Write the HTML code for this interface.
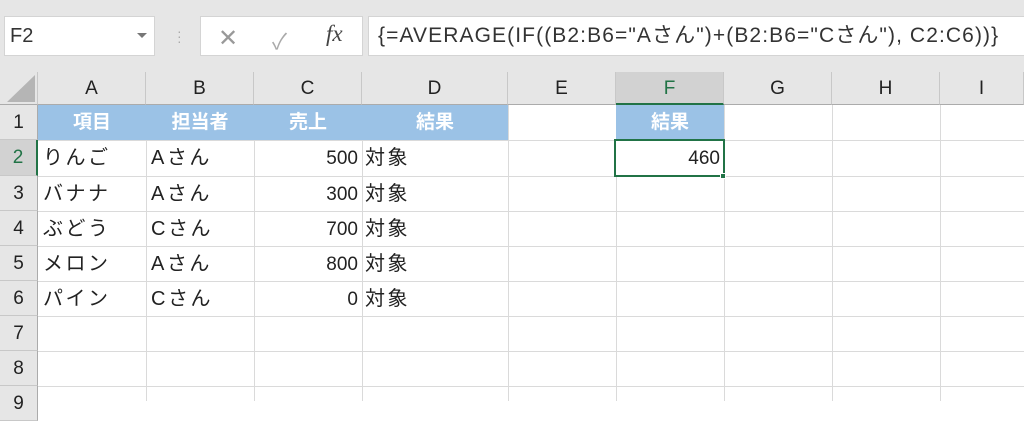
<!DOCTYPE html>
<html><head><meta charset="utf-8"><style>
body{margin:0;width:1024px;height:401px;overflow:hidden;background:#fff;font-family:"Liberation Sans","Noto Sans CJK JP",sans-serif;position:relative}
.a{position:absolute;box-sizing:border-box}
.top{left:0;top:0;width:1024px;height:72px;background:#e6e6e6}
.box{background:#fff;border:1px solid #d4d4d4}
.t{font-size:19px;color:#222;line-height:37px;white-space:nowrap}
.j{font-size:20px;letter-spacing:2.5px}
.ch{top:72px;height:33px;background:#e6e6e6;border-right:1px solid #c8c8c8;border-bottom:1px solid #ababab;text-align:center;font-size:19px;line-height:33px;color:#222}
.rh{left:0;width:38px;background:#e6e6e6;border-bottom:1px solid #c8c8c8;border-right:1px solid #ababab;text-align:center;font-size:19px;color:#222}
.vl{top:105px;width:1px;height:296px;background:#dadada}
.hl{left:38px;width:986px;height:1px;background:#dadada}
.hd{color:#fff;font-weight:bold;text-align:center}
</style></head><body>
<div class="a top"></div>
<div class="a box" style="left:4px;top:16px;width:151px;height:40px"></div>
<div class="a t" style="left:10px;top:18px;font-size:20px;color:#333">F2</div>
<div class="a" style="left:137px;top:33px;width:0;height:0;border-left:5px solid transparent;border-right:5px solid transparent;border-top:5px solid #777"></div>
<div class="a" style="left:177px;top:29px;color:#aaa;font-size:14px;line-height:5px">·<br>·<br>·</div>
<div class="a box" style="left:200px;top:16px;width:163px;height:40px"></div>
<div class="a" style="left:218px;top:24px;font-size:24px;color:#999">✕</div>
<div class="a" style="left:272px;top:24px;font-size:22px;color:#aaa">✓</div>
<div class="a" style="left:326px;top:21px;font-size:23px;color:#444;font-family:'Liberation Serif',serif;font-style:italic">fx</div>
<div class="a box" style="left:368px;top:16px;width:660px;height:40px"></div>
<div class="a t" style="left:378px;top:17px;font-size:21px;letter-spacing:1.1px;color:#333">{=AVERAGE(IF((B2:B6="Aさん")+(B2:B6="Cさん"), C2:C6))}</div>

<div class="a" style="left:0;top:72px;width:38px;height:33px;background:#e6e6e6;border-right:1px solid #c8c8c8;border-bottom:1px solid #ababab"></div>
<div class="a" style="left:7px;top:75px;width:0;height:0;border-left:28px solid transparent;border-bottom:27px solid #b5b5b5"></div>
<div class="a ch" style="left:38px;width:108px">A</div>
<div class="a ch" style="left:146px;width:108px">B</div>
<div class="a ch" style="left:254px;width:108px">C</div>
<div class="a ch" style="left:362px;width:146px">D</div>
<div class="a ch" style="left:508px;width:108px">E</div>
<div class="a ch" style="left:616px;width:108px;background:#d2d2d2;color:#217346;border-bottom:2px solid #217346">F</div>
<div class="a ch" style="left:724px;width:108px">G</div>
<div class="a ch" style="left:832px;width:108px">H</div>
<div class="a ch" style="left:940px;width:84px">I</div>

<div class="a rh" style="top:105px;height:35px;line-height:35px">1</div>
<div class="a rh" style="top:140px;height:36px;line-height:36px;background:#d2d2d2;color:#217346;border-right:2px solid #217346">2</div>
<div class="a rh" style="top:176px;height:35px;line-height:35px">3</div>
<div class="a rh" style="top:211px;height:35px;line-height:35px">4</div>
<div class="a rh" style="top:246px;height:35px;line-height:35px">5</div>
<div class="a rh" style="top:281px;height:35px;line-height:35px">6</div>
<div class="a rh" style="top:316px;height:35px;line-height:35px">7</div>
<div class="a rh" style="top:351px;height:35px;line-height:35px">8</div>
<div class="a rh" style="top:386px;height:35px;line-height:35px">9</div>

<div class="a vl" style="left:146px"></div><div class="a vl" style="left:254px"></div><div class="a vl" style="left:362px"></div><div class="a vl" style="left:508px"></div><div class="a vl" style="left:616px"></div><div class="a vl" style="left:724px"></div><div class="a vl" style="left:832px"></div><div class="a vl" style="left:940px"></div>
<div class="a hl" style="top:140px"></div><div class="a hl" style="top:176px"></div><div class="a hl" style="top:211px"></div><div class="a hl" style="top:246px"></div><div class="a hl" style="top:281px"></div><div class="a hl" style="top:316px"></div><div class="a hl" style="top:351px"></div><div class="a hl" style="top:386px"></div>

<div class="a" style="left:38px;top:105px;width:470px;height:35px;background:#9bc2e6"></div>
<div class="a" style="left:616px;top:105px;width:108px;height:35px;background:#9bc2e6"></div>
<div class="a t hd" style="left:38px;top:104px;width:108px">項目</div>
<div class="a t hd" style="left:146px;top:104px;width:108px">担当者</div>
<div class="a t hd" style="left:254px;top:104px;width:108px">売上</div>
<div class="a t hd" style="left:362px;top:104px;width:146px">結果</div>
<div class="a t hd" style="left:616px;top:104px;width:108px">結果</div>

<div class="a t j" style="left:43px;top:140px">りんご</div><div class="a t j" style="left:151px;top:140px">Aさん</div><div class="a t" style="left:254px;top:140px;width:104px;text-align:right">500</div><div class="a t j" style="left:365px;top:140px">対象</div>
<div class="a t j" style="left:43px;top:176px">バナナ</div><div class="a t j" style="left:151px;top:176px">Aさん</div><div class="a t" style="left:254px;top:176px;width:104px;text-align:right">300</div><div class="a t j" style="left:365px;top:176px">対象</div>
<div class="a t j" style="left:43px;top:211px">ぶどう</div><div class="a t j" style="left:151px;top:211px">Cさん</div><div class="a t" style="left:254px;top:211px;width:104px;text-align:right">700</div><div class="a t j" style="left:365px;top:211px">対象</div>
<div class="a t j" style="left:43px;top:246px">メロン</div><div class="a t j" style="left:151px;top:246px">Aさん</div><div class="a t" style="left:254px;top:246px;width:104px;text-align:right">800</div><div class="a t j" style="left:365px;top:246px">対象</div>
<div class="a t j" style="left:43px;top:281px">パイン</div><div class="a t j" style="left:151px;top:281px">Cさん</div><div class="a t" style="left:254px;top:281px;width:104px;text-align:right">0</div><div class="a t j" style="left:365px;top:281px">対象</div>

<div class="a" style="left:614px;top:139px;width:111px;height:38px;border:2px solid #217346;background:#fff"></div>
<div class="a t" style="left:616px;top:140px;width:104px;text-align:right">460</div>
<div class="a" style="left:720px;top:173px;width:6px;height:6px;background:#217346;border:1px solid #fff"></div>
</body></html>
